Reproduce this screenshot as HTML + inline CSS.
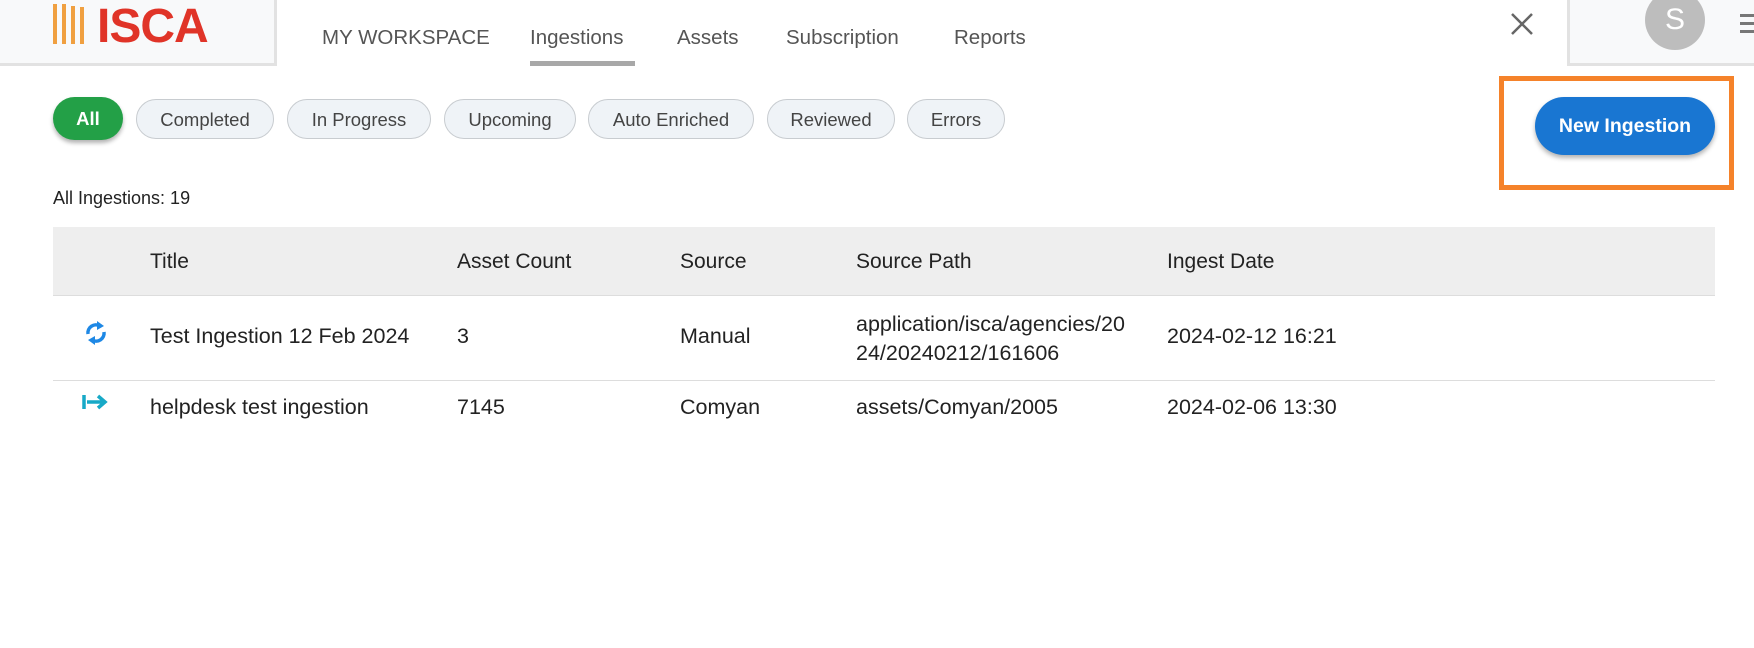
<!DOCTYPE html>
<html><head><meta charset="utf-8"><style>
body{margin:0;width:1754px;height:648px;background:#fff;font-family:"Liberation Sans",Arial,sans-serif;position:relative;overflow:hidden;color:#222}
.a{position:absolute;white-space:nowrap}
.logo{left:0;top:0;width:274px;height:63px;background:#f8f9fa;border-right:3px solid #e2e2e2;border-bottom:3px solid #e2e2e2}
.nav{top:26px;font-size:20.5px;color:#555}
.chip{top:99px;height:40px;border:1px solid #c8ccd0;border-radius:20px;background:#eff3f7;color:#444;font-size:18.5px;text-align:center;line-height:40px;box-sizing:border-box}
.th{font-size:21px;color:#222;top:250px}
.td{font-size:21.5px;color:#222}
</style></head><body>
<div class="a logo"></div>
<div class="a" style="left:53px;top:4px;width:36px;height:40px">
<div class="a" style="left:0;top:0;width:4px;height:40px;background:#f0a040"></div>
<div class="a" style="left:9px;top:0;width:4px;height:40px;background:#f0a040"></div>
<div class="a" style="left:18px;top:2px;width:4px;height:38px;background:#f0a040"></div>
<div class="a" style="left:27px;top:3px;width:4px;height:37px;background:#f0a040"></div>
</div>
<div class="a" style="left:97px;top:-1px;font-size:48px;font-weight:bold;color:#e03428;letter-spacing:-1px">ISCA</div>
<div class="a nav" style="left:322px">MY WORKSPACE</div>
<div class="a nav" style="left:530px">Ingestions</div>
<div class="a" style="left:530px;top:61px;width:105px;height:5px;background:#a8a8a8"></div>
<div class="a nav" style="left:677px">Assets</div>
<div class="a nav" style="left:786px">Subscription</div>
<div class="a nav" style="left:954px">Reports</div>
<svg class="a" style="left:1509px;top:11px" width="26" height="26" viewBox="0 0 26 26"><path d="M3 3L23 23M23 3L3 23" stroke="#666" stroke-width="2.5"/></svg>
<div class="a" style="left:1567px;top:0;width:200px;height:63px;background:#f8f9fa;border-left:3px solid #e2e2e2;border-bottom:3px solid #e2e2e2"></div>
<div class="a" style="left:1645px;top:-10px;width:60px;height:60px;border-radius:50%;background:#bdbdbd;color:#fff;font-size:30px;text-align:center;line-height:60px">S</div>
<div class="a" style="left:1740px;top:14px;width:14px;height:3px;background:#777;box-shadow:0 8px 0 #777,0 16px 0 #777"></div>
<div class="a" style="left:53px;top:97px;width:70px;height:43px;border-radius:22px;background:#23a047;color:#fff;font-weight:bold;font-size:18.5px;text-align:center;line-height:43px;box-shadow:0 3px 4px rgba(0,0,0,.3)">All</div>
<div class="a chip" style="left:136px;width:138px">Completed</div>
<div class="a chip" style="left:287px;width:144px">In Progress</div>
<div class="a chip" style="left:444px;width:132px">Upcoming</div>
<div class="a chip" style="left:588px;width:166px">Auto Enriched</div>
<div class="a chip" style="left:767px;width:128px">Reviewed</div>
<div class="a chip" style="left:907px;width:98px">Errors</div>
<div class="a" style="left:1499px;top:76px;width:235px;height:114px;border:5px solid #f5822a;box-sizing:border-box"></div>
<div class="a" style="left:1535px;top:97px;width:180px;height:58px;border-radius:29px;background:#1976d2;color:#fff;font-weight:bold;font-size:19.5px;text-align:center;line-height:58px;box-shadow:0 3px 5px rgba(0,0,0,.3)">New Ingestion</div>
<div class="a" style="left:53px;top:188px;font-size:18px;color:#222">All Ingestions: 19</div>
<div class="a" style="left:53px;top:227px;width:1662px;height:68px;background:#eee;border-bottom:1px solid #ddd"></div>
<div class="a th" style="left:150px">Title</div>
<div class="a th" style="left:457px">Asset Count</div>
<div class="a th" style="left:680px">Source</div>
<div class="a th" style="left:856px">Source Path</div>
<div class="a th" style="left:1167px">Ingest Date</div>
<svg class="a" style="left:84px;top:320px" width="24" height="26" viewBox="0 0 24 26"><g fill="none" stroke="#1e88e5" stroke-width="3.5"><path d="M4 14A8 8 0 0 1 16 6"/><path d="M20 12A8 8 0 0 1 8 20"/></g><path d="M13 1L20 6L13 10Z" fill="#1e88e5"/><path d="M11 16L4 20L11 25Z" fill="#1e88e5"/></svg>
<div class="a td" style="left:150px;top:324px">Test Ingestion 12 Feb 2024</div>
<div class="a td" style="left:457px;top:324px">3</div>
<div class="a td" style="left:680px;top:324px">Manual</div>
<div class="a td" style="left:856px;top:310px;line-height:29px">application/isca/agencies/20<br>24/20240212/161606</div>
<div class="a td" style="left:1167px;top:324px">2024-02-12 16:21</div>
<div class="a" style="left:53px;top:380px;width:1662px;height:1px;background:#ddd"></div>
<svg class="a" style="left:82px;top:392px" width="28" height="20" viewBox="0 0 28 20"><path d="M2 3V17" stroke="#17a9c7" stroke-width="3.5"/><path d="M5 10H22M16 4L23 10L16 16" fill="none" stroke="#17a9c7" stroke-width="3.5"/></svg>
<div class="a td" style="left:150px;top:395px">helpdesk test ingestion</div>
<div class="a td" style="left:457px;top:395px">7145</div>
<div class="a td" style="left:680px;top:395px">Comyan</div>
<div class="a td" style="left:856px;top:395px">assets/Comyan/2005</div>
<div class="a td" style="left:1167px;top:395px">2024-02-06 13:30</div>
</body></html>
